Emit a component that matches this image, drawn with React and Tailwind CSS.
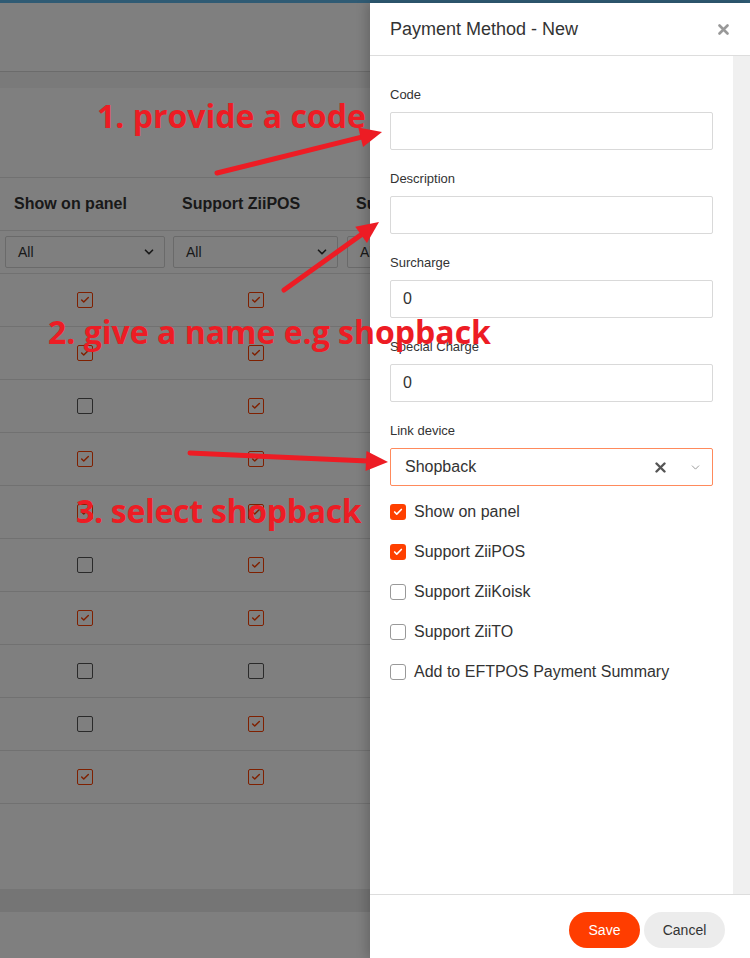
import { Check, ChevronDown } from "lucide-react";

const rows = [
  [true, true],
  [true, true],
  [false, true],
  [true, true],
  [true, true],
  [false, true],
  [true, true],
  [false, false],
  [false, true],
  [true, true],
];

function TableBox({ checked }) {
  return (
    <span className={`w-4 h-4 rounded-[2px] border-[1.5px] bg-white flex items-center justify-center ${checked ? "border-[#ff4000]" : "border-[#555]"}`}>
      {checked && <Check size={10} strokeWidth={3.5} className="text-[#ff4000]" />}
    </span>
  );
}

function FilterSelect({ className }) {
  return (
    <div className={`h-8 border border-[#d4d4d4] rounded-[2px] bg-white flex items-center justify-between pl-3 pr-2 text-[14px] text-[#333] ${className}`}>
      <span>All</span>
      <ChevronDown size={14} strokeWidth={3} className="text-[#333]" />
    </div>
  );
}

function Field({ label, value }) {
  return (
    <div className="mb-5">
      <div className="text-[13px] leading-[18px] text-[#333] mb-2">{label}</div>
      <div className="h-[38px] border border-[#d9d9d9] rounded-[2px] flex items-center pl-3 text-[16px] text-[#333]">
        {value}
      </div>
    </div>
  );
}

function FormCheck({ checked, label }) {
  return (
    <div className="h-6 flex items-center gap-2">
      {checked ? (
        <span className="w-4 h-4 rounded-[3px] bg-[#ff4000] flex items-center justify-center">
          <Check size={10} strokeWidth={4} className="text-white" />
        </span>
      ) : (
        <span className="w-4 h-4 rounded-[3px] border border-[#999] bg-white" />
      )}
      <span className="text-[16px] text-[#333]">{label}</span>
    </div>
  );
}

function Arrow({ x1, y1, x2, y2 }) {
  const dx = x2 - x1;
  const dy = y2 - y1;
  const len = Math.hypot(dx, dy);
  const ux = dx / len;
  const uy = dy / len;
  const hl = 22;
  const hw = 10;
  const bx = x2 - ux * hl;
  const by = y2 - uy * hl;
  const pts = `${x2},${y2} ${bx - uy * hw},${by + ux * hw} ${bx + uy * hw},${by - ux * hw}`;
  return (
    <g>
      <line x1={x1} y1={y1} x2={bx + ux * 2} y2={by + uy * 2} stroke="#ed1c24" strokeWidth="5" strokeLinecap="round" />
      <polygon points={pts} fill="#ed1c24" />
    </g>
  );
}

export default function App() {
  return (
    <div className="w-[750px] h-[958px] overflow-hidden flex flex-col bg-white font-['Liberation_Sans',Arial,sans-serif]">
      <div className="h-[3px] bg-[#2f5b74] shrink-0" />
      <div className="relative flex-1">
        {/* page behind the drawer */}
        <div className="flex flex-col h-full">
          <div className="h-[69px] bg-white border-b border-[#d6d6d6]" />
          <div className="h-4 bg-[#f4f4f4]" />
          <div className="bg-white">
            <div className="h-[90px] border-b border-[#e3e3e3]" />
            <div className="grid grid-cols-[169px_174px_1fr] h-[53px] border-b border-[#e3e3e3] items-center text-[16px] font-bold text-[#333]">
              <div className="pl-[14px]">Show on panel</div>
              <div className="pl-[13px]">Support ZiiPOS</div>
              <div className="pl-[13px]">Support ZiiKoisk</div>
            </div>
            <div className="grid grid-cols-[169px_174px_1fr] h-[43px] border-b border-[#e3e3e3] items-center">
              <FilterSelect className="ml-[5px] w-[160px]" />
              <FilterSelect className="ml-[4px] w-[165px]" />
              <FilterSelect className="ml-[4px] w-[165px]" />
            </div>
            {rows.map((r, i) => (
              <div key={i} className="grid grid-cols-[169px_174px_1fr] h-[53px] border-b border-[#e3e3e3] items-center">
                <div className="flex justify-center">
                  <TableBox checked={r[0]} />
                </div>
                <div className="flex justify-center">
                  <TableBox checked={r[1]} />
                </div>
                <div />
              </div>
            ))}
            <div className="h-[85px]" />
          </div>
          <div className="h-[23px] bg-[#ebebeb]" />
          <div className="flex-1 bg-white" />
        </div>

        <div className="absolute inset-0 bg-black/50" />

        {/* drawer */}
        <div className="absolute top-0 right-0 bottom-0 w-[380px] bg-white flex flex-col shadow-[-4px_0_10px_rgba(0,0,0,0.18)]">
          <div className="h-[53px] shrink-0 border-b border-[#ddd] flex items-center justify-between pl-5 pr-[21px]">
            <span className="text-[18px] text-[#333]">Payment Method - New</span>
            <svg width="11" height="11" viewBox="0 0 11 11">
              <path d="M1.5 1.5 L9.5 9.5 M9.5 1.5 L1.5 9.5" stroke="#999" strokeWidth="2.6" strokeLinecap="round" />
            </svg>
          </div>
          <div className="flex-1 flex min-h-0">
            <div className="flex-1 pl-5 pr-5 pt-[30px]">
              <Field label="Code" value="" />
              <Field label="Description" value="" />
              <Field label="Surcharge" value="0" />
              <Field label="Special Charge" value="0" />
              <div>
                <div className="text-[13px] leading-[18px] text-[#333] mb-2">Link device</div>
                <div className="h-[38px] border border-[#ff8a5c] rounded-[2px] flex items-center pl-[14px] pr-[10px] text-[16px] text-[#333]">
                  <span className="flex-1">Shopback</span>
                  <svg width="11" height="11" viewBox="0 0 11 11" className="mr-[23px]">
                    <path d="M1.5 1.5 L9.5 9.5 M9.5 1.5 L1.5 9.5" stroke="#555" strokeWidth="2.4" strokeLinecap="round" />
                  </svg>
                  <ChevronDown size={13} strokeWidth={1.8} className="text-[#999]" />
                </div>
              </div>
              <div className="mt-[14px] flex flex-col gap-4">
                <FormCheck checked label="Show on panel" />
                <FormCheck checked label="Support ZiiPOS" />
                <FormCheck label="Support ZiiKoisk" />
                <FormCheck label="Support ZiiTO" />
                <FormCheck label="Add to EFTPOS Payment Summary" />
              </div>
            </div>
            <div className="w-[17px] bg-[#f0f0f0]" />
          </div>
          <div className="h-[64px] shrink-0 border-t border-[#ddd] flex items-start justify-end gap-1 pt-[17px] pr-[25px]">
            <button className="h-9 w-[71px] rounded-full bg-[#ff3d00] text-white text-[14px]">Save</button>
            <button className="h-9 w-[81px] rounded-full bg-[#ececec] text-[#333] text-[14px]">Cancel</button>
          </div>
        </div>

        {/* annotations */}
        <div className="absolute inset-0 pointer-events-none font-['Open_Sans',sans-serif] font-bold text-[32px] leading-[40px] text-[#ed1c24]">
          <div className="absolute left-[97px] top-[93px] whitespace-nowrap">1. provide a code</div>
          <div className="absolute left-[48px] top-[309px] whitespace-nowrap">2. give a name e.g shopback</div>
          <div className="absolute left-[76px] top-[488px] whitespace-nowrap tracking-[-0.3px]">3. select shopback</div>
          <svg className="absolute inset-0" width="750" height="955">
            <Arrow x1={217} y1={170} x2={382} y2={129} />
            <Arrow x1={284} y1={287} x2={379} y2={219} />
            <Arrow x1={190} y1={450} x2={388} y2={459} />
          </svg>
        </div>
      </div>
    </div>
  );
}
